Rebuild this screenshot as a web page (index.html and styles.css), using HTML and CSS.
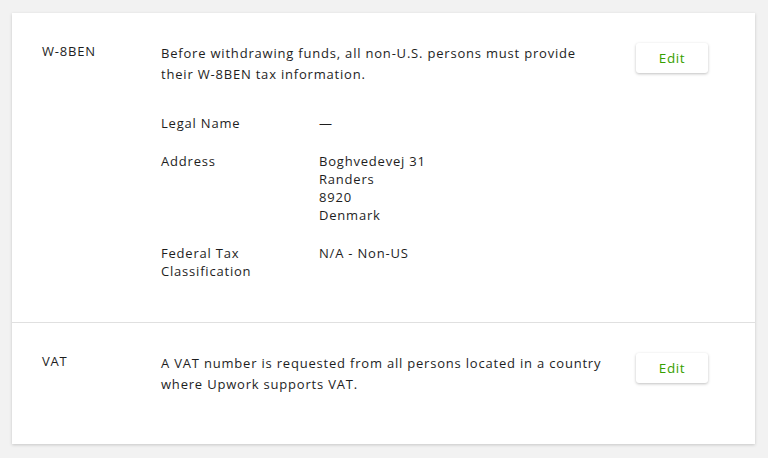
FILE: index.html
```html
<!DOCTYPE html>
<html lang="en">
<head>
<meta charset="utf-8">
<title>Tax information</title>
<link rel="stylesheet" href="styles.css">
</head>
<body>
<main class="card">
  <section class="row row-first">
    <h3 class="label">W-8BEN</h3>
    <div class="content">
      <p class="desc">Before withdrawing funds, all non-U.S. persons must provide their W-8BEN tax information.</p>
      <dl class="details">
        <div class="item">
          <dt>Legal Name</dt>
          <dd>—</dd>
        </div>
        <div class="item">
          <dt>Address</dt>
          <dd>Boghvedevej 31<br>Randers<br>8920<br>Denmark</dd>
        </div>
        <div class="item">
          <dt>Federal Tax Classification</dt>
          <dd>N/A - Non-US</dd>
        </div>
      </dl>
    </div>
    <button class="btn" type="button">Edit</button>
  </section>
  <section class="row row-last">
    <h3 class="label">VAT</h3>
    <div class="content">
      <p class="desc">A VAT number is requested from all persons located in a country where Upwork supports VAT.</p>
    </div>
    <button class="btn" type="button">Edit</button>
  </section>
</main>
</body>
</html>
```
FILE: styles.css
```css
* { box-sizing: border-box; }
html, body { margin: 0; }
body {
  background: #f2f2f2;
  padding: 13px 13px 14px 12px;
  font-family: "Open Sans", "Liberation Sans", sans-serif;
  font-size: 13px;
  line-height: 18px;
  letter-spacing: 0.8px;
  color: #1e1e1e;
}
.card {
  background: #fff;
  box-shadow: 0 1px 3px rgba(0, 0, 0, 0.18);
}
.row {
  display: flex;
  align-items: flex-start;
  padding: 30px 47px 42px 30px;
}
.row + .row { border-top: 1px solid #e0e0e0; }
.row-last { padding-bottom: 49px; }
.label {
  width: 119px;
  flex: none;
  margin: -1px 0 0;
  font-size: 13px;
  font-weight: 400;
  line-height: 18px;
}
.content {
  width: 446px;
  flex: none;
}
.desc { margin: 0; line-height: 21px; }
.details { margin: 29px 0 0; }
.item { display: flex; margin-top: 20px; }
.item:first-child { margin-top: 0; }
.item dt { width: 158px; flex: none; padding-right: 50px; }
.item dd { margin: 0; }
.btn {
  margin-left: auto;
  width: 72px;
  height: 30px;
  flex: none;
  background: #fff;
  border: 0;
  border-radius: 3px;
  box-shadow: 0 1px 3px rgba(0, 0, 0, 0.25);
  font-family: inherit;
  font-size: 13.5px;
  letter-spacing: 0.6px;
  color: #37a000;
  cursor: pointer;
}
```
